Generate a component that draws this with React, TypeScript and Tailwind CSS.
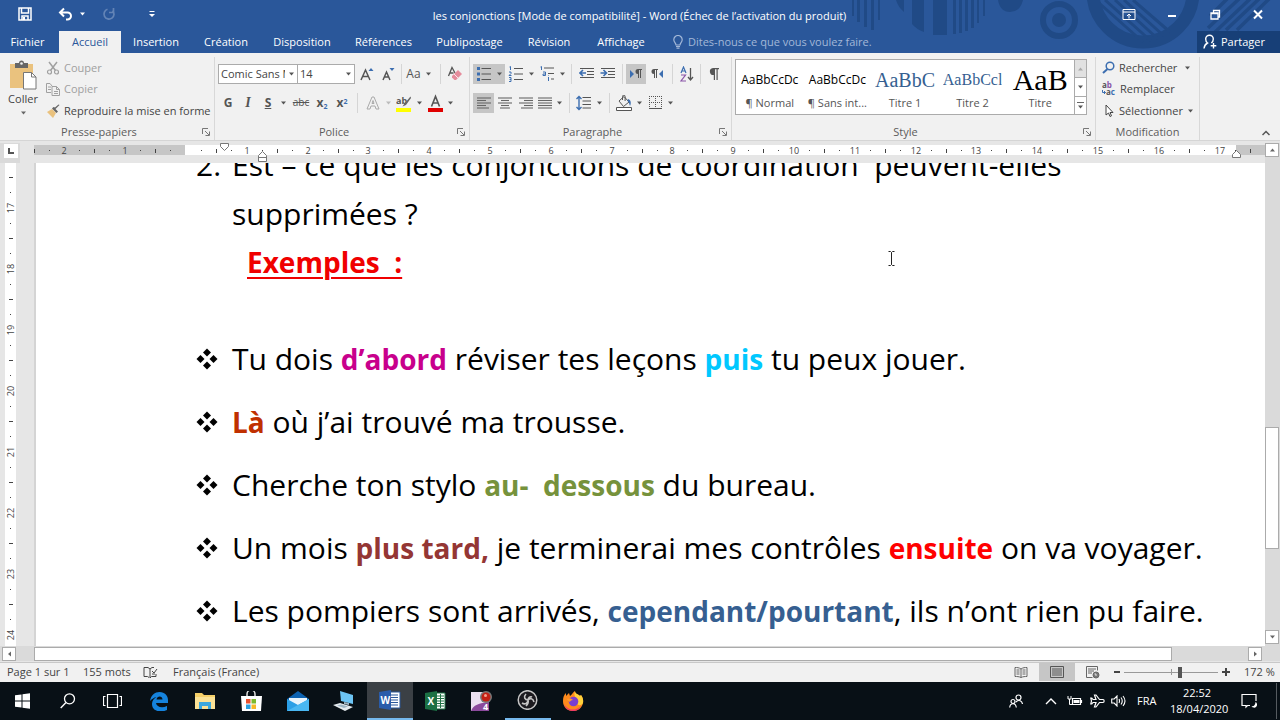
import type { ReactNode } from "react";

const BLUE = "#3c6eb0";

function Glyph({ w = 16, h = 16, children }: { w?: number; h?: number; children: ReactNode }) {
  return (
    <svg width={w} height={h} viewBox={`0 0 ${w} ${h}`} fill="none" stroke="currentColor" aria-hidden="true" className="shrink-0">
      {children}
    </svg>
  );
}

function Caret({ className = "text-[#555]" }: { className?: string }) {
  return (
    <svg width="7" height="4" viewBox="0 0 7 4" aria-hidden="true" className={`shrink-0 ${className}`}>
      <path d="M1 0.5h5L3.5 3.5z" fill="currentColor" />
    </svg>
  );
}

function Tool({ label, className, children }: { label: string; className: string; children: ReactNode }) {
  return (
    <button type="button" aria-label={label} className={`flex h-5 shrink-0 items-center justify-center gap-1 text-[#555] ${className}`}>
      {children}
    </button>
  );
}

function Divider({ className = "mx-1" }: { className?: string }) {
  return <span className={`h-5 w-px shrink-0 bg-[#d5d5d5] ${className}`} />;
}

function Group({ title, launcher = true, className, children }: { title: string; launcher?: boolean; className: string; children: ReactNode }) {
  return (
    <section aria-label={title} className={`mt-1 flex shrink-0 flex-col border-r border-[#d8d8d8] ${className}`}>
      <div className="flex-1">{children}</div>
      <div className="flex h-4 items-center text-[#5c5c5c]">
        <span className="flex-1 text-center">{title}</span>
        {launcher && (
          <button type="button" aria-label={`Options ${title}`} className="px-1 text-[#777]">
            <Glyph w={8} h={8}>
              <path d="M0.5 6V0.5H6M3 3l4 4M7.5 3.5v4h-4" />
            </Glyph>
          </button>
        )}
      </div>
    </section>
  );
}

function Combo({ label, value, className }: { label: string; value: string; className: string }) {
  return (
    <div className={`flex h-5 items-center gap-[3px] border border-[#ababab] bg-white pr-[2px] ${className}`}>
      <select aria-label={label} className="min-w-0 flex-1 appearance-none overflow-hidden pl-[2px] text-[#444] outline-none">
        <option>{value}</option>
      </select>
      <Caret />
    </div>
  );
}

function Lines({ rows }: { rows: [number, number][] }) {
  return (
    <Glyph w={14} h={12}>
      {rows.map(([a, b], i) => (
        <path key={i} d={`M${a} ${i * 2.5 + 1}H${b}`} stroke="#666" strokeWidth="1.1" />
      ))}
    </Glyph>
  );
}

const tabs: [string, string][] = [
  ["Insertion", "w-[70px]"],
  ["Création", "w-[70px]"],
  ["Disposition", "w-[82px]"],
  ["Références", "w-[81px]"],
  ["Publipostage", "w-[91px]"],
  ["Révision", "w-[68px]"],
  ["Affichage", "w-[76px]"],
];

function Pattern() {
  return (
    <svg width="430" height="53" viewBox="850 0 430 53" aria-hidden="true" className="absolute top-0 right-0 text-[#204a86]" fill="currentColor" stroke="none">
      <path d="M852 0h2v16h-2zM857 0h3v22h-3zM864 0h3v27h-3zM871 0h3v30h-3zM878 0h2v20h-2z" />
      <path d="M896 0h8v12q-6-5-8-12zM912 0h12v32q-8-3-12-8zM933 0h14v35h-14zM953 0h3v34h-3zM959 0h3v33h-3zM965 0h3v31h-3zM971 0h3v28h-3zM977 0h2v23h-2zM983 0h2v16h-2z" />
      <path d="M998 0h25q-3 12-13 12t-12-12z" />
      <circle cx="1059" cy="20" r="16" fill="none" stroke="currentColor" strokeWidth="6" />
      <circle cx="1059" cy="20" r="7" />
      <circle cx="1143" cy="-8" r="50" fill="none" stroke="currentColor" strokeWidth="13" />
      <path d="M1099 3l44 39M1105 0l46 41M1115 0l43 39M1124 0l40 36M1133 0l37 32" fill="none" stroke="currentColor" strokeWidth="3" />
      <path d="M1210 16l18-18M1208 28l32-30M1213 34l38-36M1226 30l34-32M1237 30l33-32" fill="none" stroke="currentColor" strokeWidth="3.5" />
    </svg>
  );
}

function TitleBar() {
  return (
    <header className="relative bg-[#2a579a] text-white">
      <Pattern />
      <div className="relative flex h-7 items-center">
        <div className="flex flex-1 items-center">
          <button type="button" aria-label="Enregistrer" className="ml-[18px]">
            <Glyph w={14} h={14}>
              <path d="M1 1h12v12H1z M3.5 1v5h7V1 M4 13V9h6v4" strokeWidth="1.5" />
              <path d="M5 10h2v3H5z" fill="currentColor" stroke="none" />
            </Glyph>
          </button>
          <button type="button" aria-label="Annuler" className="ml-[26px] flex items-center gap-[6px]">
            <Glyph w={15} h={14}>
              <path d="M2 5.500H9.500a3.500 3.500 0 0 1 0 7H8M6 1.500L2 5.500l4 4" strokeWidth="2" />
            </Glyph>
            <Caret className="text-white" />
          </button>
          <button type="button" aria-label="Rétablir" className="ml-4 text-[#6384b6]">
            <Glyph w={14} h={14}>
              <path d="M10.500 3.500a5 5 0 1 1-5-1.200M7 5.500h4.500V1" strokeWidth="1.700" />
            </Glyph>
          </button>
          <button type="button" aria-label="Personnaliser" className="ml-8">
            <Glyph w={8} h={8}>
              <path d="M1.500 1.500h5" />
              <path d="M1 4h6L4 7z" fill="currentColor" stroke="none" />
            </Glyph>
          </button>
        </div>
        <h1 className="mt-1">les conjonctions [Mode de compatibilité] - Word (Échec de l’activation du produit)</h1>
        <div className="flex flex-1 justify-end pr-px">
          {[
            ["Ruban", <path key="a" d="M1 1.500h12v10H1zM1 4h12M7 10.500V6M5 8l2-2 2 2" />],
            ["Réduire", <path key="b" d="M3 8h8" strokeWidth="2" />],
            ["Restaurer", <path key="c" d="M3 5h7v6H3zM5.500 5V2.500h6V9H10M3 5.500h7" strokeWidth="1.300" />],
            ["Fermer", <path key="d" d="M3 2.500l8 8M11 2.500l-8 8" strokeWidth="2" />],
          ].map(([name, shape]) => (
            <button key={name as string} type="button" aria-label={name as string} className="flex h-7 w-[43px] items-center justify-center">
              <Glyph w={14} h={13}>{shape}</Glyph>
            </button>
          ))}
        </div>
      </div>
      <nav className="relative flex h-[25px] items-stretch">
        <button type="button" className="w-[59px] pt-[2px] pr-1">Fichier</button>
        <button type="button" className="mt-[3px] w-[62px] bg-[#f1f1f1] text-[#2a579a]">Accueil</button>
        {tabs.map(([name, width]) => (
          <button key={name} type="button" className={`pt-[2px] ${width}`}>{name}</button>
        ))}
        <label className="ml-[13px] flex flex-1 items-center gap-1 pt-[2px] text-[#a3b8d8]">
          <Glyph w={12} h={14}>
            <path d="M4 10C4 8 1.800 7 1.800 4.700a4 4 0 0 1 8.400 0C10.200 7 8 8 8 10zM4 11.500h4M4.500 13.200h3" strokeWidth="1.200" />
          </Glyph>
          <input aria-label="Dites-nous ce que vous voulez faire" placeholder="Dites-nous ce que vous voulez faire." className="w-60 bg-transparent outline-none placeholder:text-[#a3b8d8]" />
        </label>
        <button type="button" className="mt-[3px] flex w-[83px] items-center gap-1 bg-[#173f77] pl-[6px]">
          <Glyph w={14} h={16}>
            <path d="M1 14.500c.5-4 2.500-5 3.500-5.500C3 8 2.700 6.500 2.700 5a3.800 3.800 0 0 1 7.600 0c0 2-.8 3.200-2 4M10.500 9v5.500M7.700 11.700h5.600" strokeWidth="1.400" />
          </Glyph>
          Partager
        </button>
      </nav>
    </header>
  );
}

function Clipboard() {
  return (
    <Group title="Presse-papiers" className="w-[215px]">
      <div className="flex">
        <button type="button" className="flex w-[46px] flex-col items-center pt-[3px] text-[#444]">
          <svg width="28" height="30" viewBox="0 0 28 30" aria-hidden="true">
            <path d="M1 4h23v24H1z" fill="#eac27e" />
            <path d="M6 3h4a2.500 2.500 0 0 1 5 0h4v5H6z" fill="#666" />
            <circle cx="12.500" cy="3.500" r="1.300" fill="#f1f1f1" />
            <path d="M14.500 12.500h8l4.500 4.500v12H14.500z" fill="#fff" stroke="#777" />
            <path d="M22.500 12.500V17H27" fill="none" stroke="#777" />
          </svg>
          <span className="mt-px">Coller</span>
          <Caret className="mt-1 text-[#666]" />
        </button>
        <div className="flex flex-col text-[#444]">
          <button type="button" className="flex h-[21px] items-center gap-1 text-[#a0a0a0]">
            <Glyph w={14} h={14}>
              <path d="M3 1l6.500 8.500M11 1L4.500 9.500" strokeWidth="1.500" />
              <circle cx="3.500" cy="11" r="2" strokeWidth="1.200" />
              <circle cx="10.500" cy="11" r="2" strokeWidth="1.200" />
            </Glyph>
            Couper
          </button>
          <button type="button" className="flex h-[22px] items-center gap-1 text-[#a0a0a0]">
            <Glyph w={14} h={14}>
              <path d="M5 10.500H.5v-9H4L6 4M2 5h3M2 7.500h3M6 4.500h4.500l3 3v6H6zM10.500 4.500v3h3M8 9.500h4M8 11.500h4" />
            </Glyph>
            Copier
          </button>
          <button type="button" className="flex h-[21px] items-center gap-1">
            <Glyph w={14} h={14}>
              <path d="M1 8l5-3 4 4-3 5z" fill="#eac27e" stroke="none" />
              <path d="M6 4.500l4.500 4.500 1.500-1.500L9.500 5l4-4-1-.5L9 3.500 7.500 3z" fill="#666" stroke="none" />
            </Glyph>
            Reproduire la mise en forme
          </button>
        </div>
      </div>
    </Group>
  );
}

function Police() {
  return (
    <Group title="Police" className="w-[255px]">
      <div className="flex flex-col gap-[9px] pt-[7px] pl-[3px]">
        <div className="flex items-center">
          <Combo label="Police" value="Comic Sans MS" className="w-20" />
          <Combo label="Taille" value="14" className="w-[57px] border-l-0" />
          <Tool label="Agrandir" className="w-[22px]">
            <Glyph>
              <path d="M3 14L7.500 4 12 14M4.500 10.500h6" strokeWidth="1.500" />
              <path d="M10.500 5L13 2l2.500 3z" fill={BLUE} stroke="none" />
            </Glyph>
          </Tool>
          <Tool label="Réduire" className="w-5">
            <Glyph>
              <path d="M4 14l3.500-8L11 14M5 11h5" strokeWidth="1.500" />
              <path d="M10.500 2L13 5l2.500-3z" fill={BLUE} stroke="none" />
            </Glyph>
          </Tool>
          <Divider className="ml-1" />
          <Tool label="Casse" className="w-[34px]">
            <span className="text-xs">Aa</span>
            <Caret />
          </Tool>
          <Divider />
          <Tool label="Effacer" className="w-5">
            <Glyph>
              <path d="M1.500 10L5 1.500 8 7M3 7h3.500" strokeWidth="1.300" />
              <path d="M5 10l6-6 4 4-6 6H7.500L5 11.500z" fill="#e58c9c" stroke="none" />
              <path d="M7 8l4 4" stroke="#fff" strokeWidth=".8" />
            </Glyph>
          </Tool>
        </div>
        <div className="flex items-center text-xs">
          <Tool label="Gras" className="w-5"><b>G</b></Tool>
          <Tool label="Italique" className="w-5"><i className="font-['Liberation_Serif',serif] text-sm font-bold">I</i></Tool>
          <Tool label="Souligné" className="w-8 pl-1"><b className="underline">S</b><span className="w-px" /><Caret /></Tool>
          <Tool label="Barré" className="w-[22px]"><s className="text-[10px]">abc</s></Tool>
          <Tool label="Indice" className="w-5"><span className="font-bold">x<sub className="text-[7px] text-[#3c6eb0]">2</sub></span></Tool>
          <Tool label="Exposant" className="w-5"><span className="font-bold">x<sup className="text-[7px] text-[#3c6eb0]">2</sup></span></Tool>
          <Divider className="mx-[5px]" />
          <Tool label="Effets" className="w-[30px] text-[#aaa]">
            <Glyph>
              <path d="M2 14L7 2h2l5 12h-3l-1-3H6l-1 3zM7 8.500h2L8 5.500z" />
            </Glyph>
            <Caret className="text-[#bbb]" />
          </Tool>
          <Tool label="Surlignage" className="w-8">
            <svg width="16" height="18" viewBox="0 0 16 18" aria-hidden="true">
              <path d="M0 14h15v4H0z" fill="#ffff00" />
              <text x="0" y="10" fontSize="9" fontWeight="bold" fill="#555">ab</text>
              <path d="M14.500 2.500l-6 7-2 3 3.500-1.500 5-7z" fill="#666" />
            </svg>
            <Caret />
          </Tool>
          <Tool label="Couleur de police" className="w-8">
            <svg width="15" height="18" viewBox="0 0 15 18" aria-hidden="true">
              <path d="M0 14h15v4H0z" fill="#e00000" />
              <path d="M3.500 12.500L7.500 2.500l4 10M5 9h5" fill="none" stroke="#555" strokeWidth="1.600" />
            </svg>
            <Caret />
          </Tool>
        </div>
      </div>
    </Group>
  );
}

function Paragraphe() {
  return (
    <Group title="Paragraphe" className="w-[262px]">
      <div className="flex flex-col gap-[9px] pt-[7px] pl-[3px]">
        <div className="flex items-center">
          <Tool label="Puces" className="w-8 bg-[#c6c6c6]">
            <Glyph>
              <path d="M5.500 2.500H15M5.500 8H15M5.500 13.500H15" />
              <path d="M1 1h3v3H1zM1 6.500h3v3H1zM1 12h3v3H1z" fill={BLUE} stroke="none" />
            </Glyph>
            <Caret />
          </Tool>
          <Tool label="Numérotation" className="w-8">
            <Glyph>
              <path d="M6 2.500h9M6 8h9M6 13.500h9" />
              <path d="M1.500 1l1-.5V4M1 6h2v1.500L1 9.500h2.500M1 11.500h2v4H1M1.500 13.500H3" stroke={BLUE} />
            </Glyph>
            <Caret />
          </Tool>
          <Tool label="Liste à plusieurs niveaux" className="w-[30px]">
            <Glyph>
              <path d="M5 2h10M9 7.500h6M12 13h3" />
              <path d="M1.500 1l1-.5V4M4 6h2.500v3.500H4V8h2M9.500 11v4M9.500 9v.5" stroke={BLUE} />
            </Glyph>
            <Caret />
          </Tool>
          <Divider className="mx-1" />
          <Tool label="Diminuer le retrait" className="w-[21px]">
            <Glyph>
              <path d="M1 2.500h14M8 5.500h7M8 8.500h7M1 11.500h14" />
              <path d="M7 7H1.500M4 4L1 7l3 3" stroke={BLUE} strokeWidth="1.600" />
            </Glyph>
          </Tool>
          <Tool label="Augmenter le retrait" className="w-[21px]">
            <Glyph>
              <path d="M1 2.500h14M8 5.500h7M8 8.500h7M1 11.500h14" />
              <path d="M.5 7H6M3.500 4l3 3-3 3" stroke={BLUE} strokeWidth="1.600" />
            </Glyph>
          </Tool>
          <Divider className="ml-1 mr-[3px]" />
          <Tool label="De gauche à droite" className="w-5 bg-[#c6c6c6]">
            <Glyph w={14} h={14}>
              <path d="M1 3l4 4-4 4z" fill={BLUE} stroke="none" />
              <path d="M9 2h4v1h-1v8h-1V3h-1v8H9V7a2.500 2.500 0 0 1 0-5z" fill="currentColor" stroke="none" />
            </Glyph>
          </Tool>
          <Tool label="De droite à gauche" className="w-[22px]">
            <Glyph w={14} h={14}>
              <path d="M13 3L9 7l4 4z" fill={BLUE} stroke="none" />
              <path d="M4 2h4v1H7v8H6V3H5v8H4V7a2.500 2.500 0 0 1 0-5z" fill="currentColor" stroke="none" />
            </Glyph>
          </Tool>
          <Divider />
          <Tool label="Trier" className="w-5">
            <Glyph w={14}>
              <path d="M1 7l2.500-6L6 7M2 5h3" stroke={BLUE} strokeWidth="1.200" />
              <path d="M1 9h4.500L1 15h5" stroke="#8a55a8" strokeWidth="1.200" />
              <path d="M10.500 2v12M8 11l2.500 3 2.500-3" strokeWidth="1.300" />
            </Glyph>
          </Tool>
          <Divider className="mx-[3px]" />
          <Tool label="Afficher tout" className="w-5">
            <Glyph w={12} h={14}>
              <path d="M5 1h6v1.300h-1.300V13H8.500V2.300H7V13H5.800V8A3.500 3.500 0 0 1 5 1z" fill="currentColor" stroke="none" />
            </Glyph>
          </Tool>
        </div>
        <div className="flex items-center">
          <Tool label="Aligner à gauche" className="w-[21px] bg-[#c6c6c6]"><Lines rows={[[0, 14], [0, 9], [0, 14], [0, 9], [0, 12]]} /></Tool>
          <Tool label="Centrer" className="w-[21px]"><Lines rows={[[0, 14], [3, 11], [0, 14], [3, 11], [2, 12]]} /></Tool>
          <Tool label="Aligner à droite" className="w-[21px]"><Lines rows={[[0, 14], [5, 14], [0, 14], [5, 14], [2, 14]]} /></Tool>
          <Tool label="Justifier" className="w-[29px]"><Lines rows={[[0, 14], [0, 14], [0, 14], [0, 14], [0, 14]]} /><Caret /></Tool>
          <Divider />
          <Tool label="Interligne" className="w-[31px]">
            <Glyph>
              <path d="M6.500 2.500H15M6.500 6H15M6.500 9.500H15M6.500 13H15" />
              <path d="M3 1.500v13M.5 4L3 1.500 5.500 4M.5 12L3 14.500 5.500 12" stroke={BLUE} strokeWidth="1.400" />
            </Glyph>
            <Caret />
          </Tool>
          <Divider />
          <Tool label="Trame de fond" className="w-[30px]">
            <Glyph>
              <path d="M3 6l5-4.500L13 7l-5.500 4.500zM6.500 5V1.500a1.300 1.300 0 0 1 2.600 0V6" />
              <path d="M12 4c3 1 3.500 4 2 7-1-2-.5-4-2.500-5z" fill={BLUE} stroke="none" />
              <path d="M.5 12.500h15v3H.5z" fill="#fff" />
            </Glyph>
            <Caret />
          </Tool>
          <Tool label="Bordures" className="w-[34px]">
            <Glyph w={14} h={14}>
              <path d="M0 .5H13M0 6.500H13M.5 0V12M6.500 0V12M12.500 0V12" strokeDasharray="1 1" />
              <path d="M0 12.500h13" />
            </Glyph>
            <Caret />
          </Tool>
        </div>
      </div>
    </Group>
  );
}

const styles: [string, string, string][] = [
  ["AaBbCcDc", "¶ Normal", "text-xs text-black"],
  ["AaBbCcDc", "¶ Sans int...", "text-xs text-black"],
  ["AaBbC", "Titre 1", "font-['Liberation_Serif',serif] text-xl text-[#365f91]"],
  ["AaBbCcl", "Titre 2", "font-['Liberation_Serif',serif] text-base text-[#365f91]"],
  ["AaB", "Titre", "font-['Liberation_Serif',serif] text-3xl text-black"],
];

function StyleGallery() {
  return (
    <Group title="Style" className="w-[364px]">
      <div className="mt-[2px] ml-[3px] flex h-14 w-[352px] border border-[#ababab] bg-white">
        {styles.map(([sample, name, look], i) => (
          <button key={i} type="button" className="flex min-w-0 flex-1 flex-col items-center px-1 text-[#555]">
            <span className={`flex h-[35px] w-full items-center justify-center overflow-hidden pt-1 whitespace-nowrap ${look}`}>
              <span>{sample}</span>
            </span>
            <span className="whitespace-nowrap">{name}</span>
          </button>
        ))}
        <div className="flex w-3 flex-col divide-y divide-[#ababab] border-l border-[#ababab]">
          <button type="button" aria-label="Précédent" className="flex flex-1 items-center justify-center bg-[#e1e1e1]"><Caret className="rotate-180 text-[#aaa]" /></button>
          <button type="button" aria-label="Suivant" className="flex flex-1 items-center justify-center"><Caret /></button>
          <button type="button" aria-label="Autres styles" className="flex flex-1 flex-col items-center justify-center gap-[2px]"><span className="h-px w-[7px] bg-[#666]" /><Caret /></button>
        </div>
      </div>
    </Group>
  );
}

function Modification() {
  return (
    <Group title="Modification" launcher={false} className="w-[104px]">
      <div className="flex flex-col pl-[6px] text-[#444]">
        <button type="button" className="flex h-[21px] items-center gap-1">
          <Glyph w={13} h={13}>
            <circle cx="8" cy="5" r="3.800" stroke={BLUE} strokeWidth="1.500" />
            <path d="M5.500 8L1 12" stroke={BLUE} strokeWidth="2" />
          </Glyph>
          <span className="flex-1 text-left">Rechercher</span>
          <Caret className="mr-2 text-[#555]" />
        </button>
        <button type="button" className="flex h-[22px] items-center gap-1">
          <svg width="14" height="20" viewBox="0 0 14 20" aria-hidden="true" fontSize="8" fontWeight="bold">
            <text x="0" y="9" fill="#555">a<tspan fill="#8a55a8">b</tspan></text>
            <text x="4" y="16" fill="#555">a<tspan fill={BLUE}>c</tspan></text>
            <path d="M.5 11v2.500h3M2 12l1.500 1.500L2 15" fill="none" stroke={BLUE} />
          </svg>
          Remplacer
        </button>
        <button type="button" className="flex h-[21px] items-center gap-1">
          <Glyph w={13} h={14}>
            <path d="M4 1v10l2.500-2L8 12.500l1.500-.7L8 8.500h3z" fill="#fff" />
          </Glyph>
          <span>Sélectionner</span>
          <Caret />
        </button>
      </div>
    </Group>
  );
}

const cms = Array.from({ length: 21 }, (_, i) => i - 3);

function HorizontalRuler() {
  return (
    <svg width="100%" height="20" aria-label="Règle horizontale" className="block shrink-0 overflow-hidden text-[9px]" fill="#444">
      <rect x="0" y="2" width="100%" height="10" fill="#c6c6c6" />
      <rect x="151" y="2" width="1051" height="10" fill="#fff" />
      {cms.map((n) => {
        const x = 152 + Math.round(n * 60.8);
        return (
          <g key={n}>
            {n !== 0 && n !== -3 && n < 18 && <text x={x} y="11" textAnchor="middle">{Math.abs(n)}</text>}
            {x + 15 > 0 && <rect x={x + 15} y="7" width="1" height="1" />}
            <rect x={x + 30} y="6" width="1" height="4" />
            {x + 45 < 1200 && <rect x={x + 45} y="7" width="1" height="1" />}
          </g>
        );
      })}
      <path d="M186.500 .5h8v3l-4 4-4-4zM224.500 18.500v-6l4-4 4 4v6zM224.500 14.500h8M1198.500 14.500v-3l4-4 4 4v3z" fill="#fff" stroke="#777" />
    </svg>
  );
}

function VerticalRuler() {
  return (
    <svg width="11" height="484" aria-label="Règle verticale" className="block bg-white text-[9px]" fill="#444">
      {[16, 17, 18, 19, 20, 21, 22, 23, 24].map((n) => {
        const y = 45 + (n - 17) * 61;
        return (
          <g key={n}>
            {n > 16 && <text transform={`translate(9 ${y}) rotate(-90)`} textAnchor="middle">{n}</text>}
            <rect x="5" y={y + 15} width="1" height="1" />
            <rect x="4" y={y + 30} width="4" height="1" />
            <rect x="5" y={y + 45} width="1" height="1" />
          </g>
        );
      })}
    </svg>
  );
}

function Bullet({ children }: { children: ReactNode }) {
  return (
    <li className="flex h-12 items-center">
      <svg width="22" height="22" viewBox="0 0 22 22" aria-hidden="true" className="mr-[14px] shrink-0">
        <path d="M11 0.500l4 4L11 8.500 7 4.500zM11 13.500l4 4L11 21.500l-4-4zM4.500 7L8.500 11l-4 4L0.500 11zM17.500 7L21.500 11l-4 4L13.500 11z" />
      </svg>
      <span>{children}</span>
    </li>
  );
}

function Page() {
  return (
    <main className="relative min-h-0 flex-1 overflow-hidden border-l-2 border-[#d4d4d4] bg-white pl-[160px] font-['Comic_Sans_MS','Open_Sans',sans-serif] text-[30px] whitespace-nowrap text-black [&_b]:text-[28px]">
      <div className="-mt-[23px] flex leading-[49px]">
        <span className="w-9">2.</span>
        <p className="whitespace-pre">{"Est – ce que les conjonctions de coordination  peuvent-elles\nsupprimées ?"}</p>
      </div>
      <h2 className="pl-[51px] text-[28px] leading-[49px] font-bold whitespace-pre text-[#f00000] underline decoration-2 underline-offset-4">{"Exemples  :"}</h2>
      <ul className="mt-12 flex flex-col gap-[15px]">
        <Bullet>Tu dois <b className="text-[#c8008c]">d’abord</b> réviser tes leçons <b className="text-[#00c8ff]">puis</b> tu peux jouer.</Bullet>
        <Bullet><b className="text-[#c03000]">Là</b> où j’ai trouvé ma trousse.</Bullet>
        <Bullet>Cherche ton stylo <b className="whitespace-pre text-[#76923c]">au-  dessous</b> du bureau.</Bullet>
        <Bullet>Un mois <b className="text-[#943634]">plus tard,</b> je terminerai mes contrôles <b className="text-[#ff0000]">ensuite</b> on va voyager.</Bullet>
        <Bullet>Les pompiers sont arrivés, <b className="text-[#365f91]">cependant/pourtant</b>, ils n’ont rien pu faire.</Bullet>
      </ul>
      <svg width="7" height="15" viewBox="0 0 7 15" aria-hidden="true" className="absolute top-[88px] left-[852px]">
        <path d="M.5.5h2l1 1 1-1h2M3.500 1.500v12M.5 14.500h2l1-1 1 1h2" fill="none" stroke="#222" />
      </svg>
    </main>
  );
}

function ScrollButton({ label, className }: { label: string; className: string }) {
  return (
    <button type="button" aria-label={label} className="flex h-[14px] w-[14px] shrink-0 items-center justify-center border border-[#ababab] bg-white">
      <Caret className={className} />
    </button>
  );
}

function Workspace() {
  return (
    <div className="flex min-h-0 flex-1 flex-col bg-[#e6e6e6]">
      <div className="flex min-h-0 flex-1">
        <div className="flex w-[34px] shrink-0 flex-col overflow-hidden">
          <div className="mr-[14px] h-5 shrink-0 bg-[#dadada] pt-px pl-1">
            <button type="button" aria-label="Tabulation" className="flex h-[14px] w-[14px] items-center justify-center bg-white text-[#555]">
              <Glyph w={6} h={6}><path d="M1 0v5h5" strokeWidth="2" /></Glyph>
            </button>
          </div>
          <div className="min-h-0 flex-1 overflow-hidden pl-[5px]"><VerticalRuler /></div>
        </div>
        <div className="flex min-w-0 flex-1 flex-col">
          <HorizontalRuler />
          <Page />
        </div>
        <div className="flex w-[15px] shrink-0 flex-col bg-[#dadada] pb-[2px]">
          <ScrollButton label="Défiler vers le haut" className="rotate-180 text-[#666]" />
          <div className="flex-[272]" />
          <div className="w-[14px] flex-[121] border border-[#ababab] bg-white" />
          <div className="flex-[82]" />
          <ScrollButton label="Défiler vers le bas" className="text-[#666]" />
        </div>
      </div>
      <div className="mb-px flex h-[15px] shrink-0 items-end bg-[#dadada] pr-[18px] pl-[2px]">
        <ScrollButton label="Défiler vers la gauche" className="rotate-90 text-[#666]" />
        <div className="ml-[18px] h-[14px] flex-[1138] border border-[#ababab] bg-white" />
        <div className="flex-[76]" />
        <ScrollButton label="Défiler vers la droite" className="-rotate-90 text-[#666]" />
      </div>
    </div>
  );
}

function StatusBar() {
  return (
    <footer className="flex h-5 shrink-0 items-center border-t border-[#c8c8c8] bg-[#f1f1f1] pb-px text-[#444]">
      <span className="w-[83px] pl-[7px]">Page 1 sur 1</span>
      <span className="w-[60px]">155 mots</span>
      <Glyph w={15} h={13}>
        <path d="M6 11.500L4.500 10.500H1v-9h4L7 3v9l1.500-1.500H13V8M7 3l2-1.500h2M9 5l2 2 3-4M9 8h3" />
      </Glyph>
      <span className="ml-[15px] flex-1">Français (France)</span>
      <button type="button" aria-label="Mode Lecture" className="flex w-[37px] justify-center text-[#666]">
        <Glyph w={14} h={12}><path d="M1 1.500c2 0 4 0 6 1.500 2-1.500 4-1.500 6-1.500v9c-2 0-4 0-6 1-2-1-4-1-6-1zM7 3v8.500M2.500 4h3M2.500 6h3M2.500 8h3M8.500 4h3M8.500 6h3M8.500 8h3" /></Glyph>
      </button>
      <button type="button" aria-label="Page" className="flex h-full w-[36px] items-center justify-center bg-[#c6c6c6] text-[#555]">
        <Glyph w={14} h={12}><path d="M.5.5h13v11H.5zM2 3h10M2 5h10M2 7h10M2 9h10" /></Glyph>
      </button>
      <button type="button" aria-label="Mode Web" className="flex w-[36px] justify-center text-[#666]">
        <Glyph w={14} h={13}>
          <path d="M6.500 11.500h-6V.5h11v4M2 3h8M2 5h6M2 7h4" />
          <circle cx="10" cy="9" r="3" fill="#777" />
          <path d="M8.500 8h1.500v2" stroke="#fff" strokeWidth=".8" />
        </Glyph>
      </button>
      <button type="button" aria-label="Zoom arrière" className="flex w-3 justify-center"><Glyph w={6} h={6}><path d="M0 3h6" strokeWidth="2" /></Glyph></button>
      <span className="relative ml-px flex h-3 items-center">
        <span className="absolute left-1/2 h-[6px] w-px bg-[#999]" />
        <input
          type="range"
          aria-label="Zoom"
          defaultValue={60}
          className="relative h-px w-[94px] appearance-none bg-[#999] outline-none [&::-webkit-slider-thumb]:h-[11px] [&::-webkit-slider-thumb]:w-1 [&::-webkit-slider-thumb]:appearance-none [&::-webkit-slider-thumb]:bg-[#555]"
        />
      </span>
      <button type="button" aria-label="Zoom avant" className="ml-1 flex w-2 justify-center"><Glyph w={8} h={8}><path d="M0 4h8M4 0v8" strokeWidth="2" /></Glyph></button>
      <span className="ml-[14px] w-[36px] whitespace-nowrap">172 %</span>
    </footer>
  );
}

const apps: { name: string; className?: string; icon: ReactNode }[] = [
  {
    name: "Edge",
    icon: <path d="M1 10C2 4 6 1 10.500 1 16 1 19 5 19 9v3H7c.5 4 6 5.500 11 3v4c-6 3-15 1.500-15-6 0-3.500 2-5.500 4.500-7C5 6.500 3 8 1 10zm6.500-1.500h6C13.500 4.500 8 4.500 7.500 8.500z" fill="#1583dd" />,
  },
  {
    name: "Explorateur",
    icon: <><path d="M0 2h7l2 2h11v14H0z" fill="#f5cf68" /><path d="M0 6h20v12H0z" fill="#fbe296" /><path d="M4 11h12v7h-3v-3H7v3H4z" fill="#3ba7dd" /></>,
  },
  {
    name: "Store",
    icon: <><path d="M6 6V3a4 4 0 0 1 8 0v3" fill="none" stroke="#ddd" strokeWidth="1.500" /><path d="M0 5h21l-1 15H1z" fill="#fff" /><path d="M5 8h4.500v4.500H5z" fill="#e8502f" /><path d="M10.500 8H15v4.500h-4.500z" fill="#7dba2d" /><path d="M5 13.500h4.500V18H5z" fill="#2aa0e0" /><path d="M10.500 13.500H15V18h-4.500z" fill="#f7b928" /></>,
  },
  {
    name: "Courrier",
    icon: <><path d="M0 8l11-8 11 8v12H0z" fill="#0d62b0" /><path d="M2 7h18v8H2z" fill="#e9f4fc" /><path d="M0 8l11 6 11-6v12H0z" fill="#2b9fe6" /><path d="M0 20L22 8v12z" fill="#49b7f2" /></>,
  },
  {
    name: "Bureau à distance",
    icon: <><path d="M7 0l13 4v9L8 10z" fill="#6cc4f4" /><path d="M0 14l7-2 13 4-8 4z" fill="#e4eaee" /><path d="M4 14.500l4-1 7 2-4 1.500z" fill="#9db4c3" /><path d="M11 11l5 1v2l-5-1z" fill="#9db4c3" /></>,
  },
  {
    name: "Word",
    className: "bg-[#3b4045] border-b-2 border-[#76b9ed]",
    icon: <><path d="M9 2h12v16H9z" fill="#fff" stroke="#2a579a" /><path d="M12 5h7M12 7.500h7M12 10h7M12 12.500h7M12 15h7" stroke="#2a579a" /><path d="M0 2l12-2v20L0 18z" fill="#2a5caa" /><text x="1.500" y="13.500" fontSize="10" fontWeight="bold" fill="#fff">W</text></>,
  },
  {
    name: "Excel",
    icon: <><path d="M9 2h11v16H9z" fill="#fff" stroke="#217346" /><path d="M12 5h7M12 7.500h7M12 10h7M12 12.500h7M12 15h7M15.500 3v14" stroke="#217346" /><path d="M0 2l12-2v20L0 18z" fill="#1c7044" /><text x="2.500" y="13.500" fontSize="10" fontWeight="bold" fill="#fff">X</text></>,
  },
  {
    name: "Enregistreur",
    icon: <><path d="M0 1h18v19H0z" fill="#eadff0" /><path d="M0 20c2-6 8-8 18-9v9z" fill="#8b4a9c" /><circle cx="15" cy="6" r="6" fill="#777" /><circle cx="15" cy="6" r="4.500" fill="#c32014" /><circle cx="14.500" cy="4.500" r="1.500" fill="#f5a08c" /><text x="12" y="19" fontSize="9" fontWeight="bold" fill="#fff">4</text></>,
  },
  {
    name: "OBS",
    className: "border-b-2 border-[#76b9ed]",
    icon: <><circle cx="10.500" cy="10" r="9.300" fill="#1c1b20" stroke="#c5c5c5" strokeWidth="1.500" /><path d="M9 4c-3 3-1 6 2 6 0 3-3 5-6 3M11 10c2-2 5-2 6 2M11 10c0-2 2-4 4-3M11 10c1 3-1 5-2 6" fill="none" stroke="#c5c5c5" strokeWidth="1.600" /></>,
  },
  {
    name: "Firefox",
    icon: <><path d="M10 20C4 20 0 16 0 10c0-4 1-6 3-8v3l3-3 1 3C9 4 9 2 12 0c0 3 3 3 5 5l1-1c2 3 2.500 5 2 8-1 5-5 8-10 8z" fill="#ff8a1c" /><path d="M12 0c0 3 3 3 5 5l1-1c2 3 2.500 5 2 8-2 3-5 3-6 0 0-5-4-6-2-12z" fill="#ffd23c" /><path d="M1 13c3 6 11 8 17 2-2 4-5 5-8 5-5 0-8-3-9-7z" fill="#f0356b" /><circle cx="10.500" cy="10.500" r="4.800" fill="#7a3fd0" /><path d="M4 8c3-1 5 0 6 1-2 0-3 1-3 2-2-1-3-2-3-3z" fill="#ff9a2e" /></>,
  },
];

function Taskbar() {
  return (
    <div className="flex h-[38px] shrink-0 items-stretch bg-[#081016] text-white">
      <button type="button" aria-label="Démarrer" className="flex w-[45px] items-center justify-center">
        <svg width="15" height="16" viewBox="0 0 15 16" fill="currentColor" aria-hidden="true"><path d="M0 2.300L6.500 1.500v6H0zM7.500 1.300L15 .3v7.200H7.500zM0 8.500h6.500v6L0 13.700zM7.500 8.500H15v7.200l-7.500-1z" /></svg>
      </button>
      <button type="button" aria-label="Rechercher" className="flex w-[45px] items-center justify-center">
        <Glyph><circle cx="9.500" cy="5.800" r="5" strokeWidth="1.300" /><path d="M6 9.500L.7 15" strokeWidth="1.400" /></Glyph>
      </button>
      <button type="button" aria-label="Affichage des tâches" className="mr-[2px] flex w-[45px] items-center justify-center">
        <Glyph w={19} h={14}><path d="M4.500.5h10v13h-10zM2.500 2.500h-2v9h2M16.500 2.500h2v9h-2" strokeWidth="1.200" /></Glyph>
      </button>
      {apps.map((app) => (
        <button key={app.name} type="button" aria-label={app.name} className={`flex w-[46px] items-center justify-center ${app.className ?? ""}`}>
          <svg width="22" height="20" viewBox="0 0 22 20" aria-hidden="true">{app.icon}</svg>
        </button>
      ))}
      <div className="ml-auto flex items-center">
        <button type="button" aria-label="Contacts" className="mr-[22px]">
          <Glyph w={14} h={14}><circle cx="9.500" cy="3.500" r="2.500" strokeWidth="1.200" /><circle cx="4" cy="7.500" r="2" strokeWidth="1.200" /><path d="M.7 13.500c.5-5 6-5 6.600 0M7 8c3-3 6-1 6.500 2" strokeWidth="1.200" /></Glyph>
        </button>
        <button type="button" aria-label="Icônes cachées" className="mr-[10px]">
          <Glyph w={12} h={8}><path d="M1 7l5-5 5 5" strokeWidth="1.400" /></Glyph>
        </button>
        <button type="button" aria-label="Batterie" className="mr-[7px]">
          <Glyph w={16} h={12}><path d="M5.500 3.500h8v6h-8zM14.500 5v3" strokeWidth="1.200" /><path d="M6.500 5h6v3h-6z" fill="currentColor" stroke="none" /><path d="M1 1v3h3V1M2.500 4v5.500H5" /></Glyph>
        </button>
        <button type="button" aria-label="Mode Avion" className="mr-[6px]">
          <Glyph w={15} h={14}><path d="M6 5.500L4.500 1H6l3.500 4.500H13c1.500 0 1.500 3 0 3H9.500L6 13H4.500L6 8.500H3L1.800 10H.8l.7-3-.7-3h1L3 5.500z" strokeWidth="1.200" /></Glyph>
        </button>
        <button type="button" aria-label="Volume" className="mr-[10px]">
          <Glyph w={16} h={12}><path d="M.7 4h2.500L6 1v10L3.200 8H.7z" strokeWidth="1.100" /><path d="M8 4q1 2 0 4M10 2.500q2.500 3.500 0 7M12 1q4 5 0 10" strokeWidth="1.100" /></Glyph>
        </button>
        <span className="w-[33px]">FRA</span>
        <time className="flex w-[54px] flex-col text-center leading-4">
          <span>22:52</span>
          <span>18/04/2020</span>
        </time>
        <button type="button" aria-label="Notifications" className="ml-[17px] w-[35px]">
          <Glyph w={16} h={16}><path d="M9 12.500H6.500L5 14v-1.500H1v-11h14V8" strokeWidth="1.200" /><path d="M14.500 9a3 3 0 1 1-4 4.200c2.500.5 4-1.700 4-4.200z" fill="currentColor" stroke="none" /></Glyph>
        </button>
        <span className="mr-[3px] h-9 w-px bg-[#555b60]" />
      </div>
    </div>
  );
}

export default function App() {
  return (
    <div className="flex h-screen flex-col overflow-hidden bg-[#e6e6e6] font-['Open_Sans',sans-serif] text-[11px] leading-4">
      <TitleBar />
      <div className="mb-[2px] flex h-[88px] shrink-0 border-b border-[#d5d5d5] bg-[#f1f1f1]">
        <Clipboard />
        <Police />
        <Paragraphe />
        <StyleGallery />
        <Modification />
        <button type="button" aria-label="Réduire le ruban" className="mt-auto mr-[10px] mb-1 ml-auto text-[#555]">
          <Glyph w={8} h={6}><path d="M.5 5L4 1.500 7.500 5" strokeWidth="1.500" /></Glyph>
        </button>
      </div>
      <Workspace />
      <StatusBar />
      <Taskbar />
    </div>
  );
}
